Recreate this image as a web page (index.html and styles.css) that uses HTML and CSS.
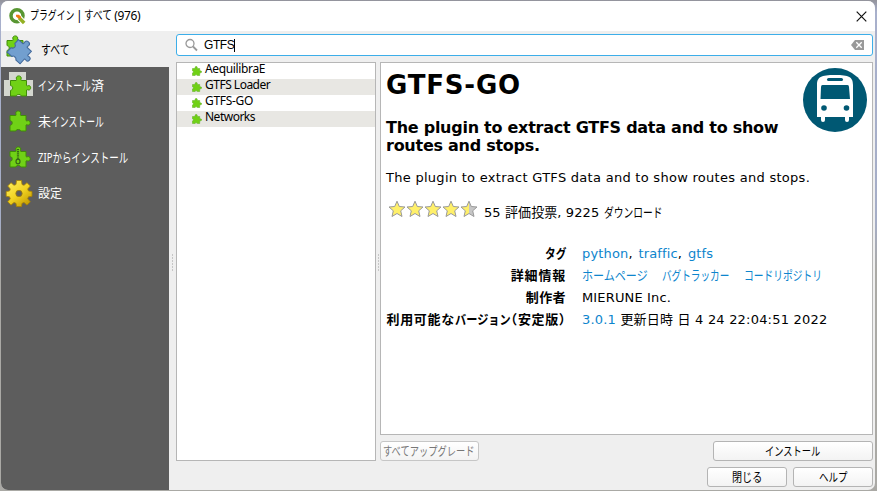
FILE: index.html
```html
<!DOCTYPE html>
<html lang="ja">
<head>
<meta charset="utf-8">
<title>プラグイン | すべて (976)</title>
<link rel="stylesheet" href="styles.css">
</head>
<body>
<svg class="defs" width="0" height="0" aria-hidden="true">
  <defs>
    <linearGradient id="half"><stop offset=".48" stop-color="#fff06a"/><stop offset=".48" stop-color="#c6c6c6"/></linearGradient>
    <linearGradient id="gold" x2=".8" y2="1"><stop stop-color="#fff265"/><stop offset=".55" stop-color="#f1d322"/><stop offset="1" stop-color="#c29a00"/></linearGradient>
    <symbol id="puzzle" viewBox="0 0 22 22"><path d="M1 5.500H6.700C7.500 4.900 6.800 4.500 6.800 3 6.800.2 11.700.2 11.700 3 11.700 4.500 11 4.900 11.800 5.500H17V10.500C17.800 11.300 18.300 10.600 19.300 10.600 21.800 10.600 21.800 15 19.300 15 18.300 15 17.800 14.300 17 15V21H11.800C11.200 20.300 11.600 19.500 9.300 19.500 7 19.500 7.400 20.300 6.800 21H1V15.500C1.800 15 3.200 15 3.200 12.900 3.200 10.800 1.800 11 1 10.500Z"/></symbol>
    <symbol id="star" viewBox="0 0 18 18"><path d="M9 1.200 11.300 6.500 17 7 12.700 10.800 14 16.500 9 13.500 4 16.500 5.300 10.800 1 7 6.700 6.500Z"/></symbol>
  </defs>
</svg>
<div class="window">
  <header class="titlebar">
    <svg class="logo" width="17" height="17" viewBox="0 0 17 17"><circle cx="8" cy="7.800" r="6" fill="none" stroke="#589632" stroke-width="3.500"/><path d="M8 7.500 15.500 15.500" stroke="#fff" stroke-width="5.500"/><path d="M10 9.800 15.200 15" stroke="#93b023" stroke-width="3.500"/><path d="M7 6.800h3l2 2v1.800H9.500L7 8.500Z" fill="#ee7913"/></svg>
    <h1 class="title"><span class="sq t-title">プラグイン</span> | <span class="sq t-all">すべて</span> (976)</h1>
    <svg class="close" width="11" height="11" viewBox="0 0 11 11"><path d="M.7.7 10.300 10.300M10.300.7.7 10.300" stroke="#111" stroke-width="1.200"/></svg>
  </header>
  <div class="body">
    <nav class="sidebar">
      <a class="nav active">
        <svg width="30" height="28" viewBox="0 0 30 28"><use href="#puzzle" x="1" y="0" width="22" height="22" fill="#70d116" stroke="#408c09"/><g transform="rotate(42 16 15)"><use href="#puzzle" x="6" y="3" width="24" height="24" fill="#729fcf" stroke="#456c9e"/></g></svg>
        <span class="sq n-all">すべて</span></a>
      <a class="nav">
        <svg width="28" height="28" viewBox="0 0 28 28"><path d="M4 1H21V9H28V25H-1V9H4Z" fill="#d4d7cf"/><use href="#puzzle" x="4" y="4" width="23" height="22" fill="#70d116" stroke="#408c09"/></svg>
        <span class="lbl"><span class="sq kana">インストール</span>済</span></a>
      <a class="nav">
        <svg width="28" height="28" viewBox="0 0 28 28"><use href="#puzzle" x="4" y="3" width="22" height="22" fill="#70d116" stroke="#408c09"/></svg>
        <span class="lbl">未<span class="sq kana">インストール</span></span></a>
      <a class="nav">
        <svg width="28" height="28" viewBox="0 0 28 28"><use href="#puzzle" x="4" y="3" width="22" height="22" fill="#70d116" stroke="#408c09"/><path d="M13 6V17" stroke="#356716" stroke-width="2.200" stroke-dasharray="1.300 .8"/><ellipse cx="13" cy="18.500" rx="2" ry="2.300" fill="none" stroke="#356716" stroke-width="1.200"/></svg>
        <span class="sq n-zip">ZIPからインストール</span></a>
      <a class="nav">
        <svg width="28" height="28" viewBox="0 0 28 28"><g stroke="#a88300" stroke-width=".8"><path fill="url(#gold)" d="M11.500 1.500h5l.5 4 2 .8 3-2.600 3.300 3.300-2.600 3 .8 2 3.500.5v4.800l-3.500.5-.8 2 2.600 3-3.300 3.300-3-2.600-2 .8-.5 3.200h-5l-.5-3.200-2-.8-3 2.600-3.300-3.300 2.600-3-.8-2-3.300-.5v-4.800l3.300-.5.8-2-2.600-3L6 3.700l3 2.600 2-.8Z"/><circle cx="14" cy="14.500" r="3.200" fill="#5d5d5d"/></g></svg>
        <span class="lbl n-set">設定</span></a>
    </nav>
    <main class="main">
      <div class="search">
        <svg width="14" height="14" viewBox="0 0 14 14"><circle cx="5" cy="5.500" r="4" fill="none" stroke="#999" stroke-width="1.300"/><path d="M8 8.500 12 12.500" stroke="#999" stroke-width="1.800"/></svg>
        <span class="query">GTFS</span><i class="caret"></i>
        <svg class="clear" width="13" height="10" viewBox="0 0 13 10"><path d="M4 0H13V10H4L0 5Z" fill="#999"/><path d="M5.300 2.200 10.700 7.800M10.700 2.200 5.300 7.800" stroke="#fff" stroke-width="1.300"/></svg>
      </div>
      <div class="split">
        <i class="grip"></i>
        <ul class="list">
          <li><svg><use href="#puzzle"/></svg><span class="l1">AequilibraE</span></li>
          <li><svg><use href="#puzzle"/></svg><span class="l2">GTFS Loader</span></li>
          <li><svg><use href="#puzzle"/></svg><span class="l3">GTFS-GO</span></li>
          <li><svg><use href="#puzzle"/></svg><span class="l4">Networks</span></li>
        </ul>
        <i class="grip"></i>
        <section class="right">
          <article class="detail">
            <svg class="bus" width="64" height="64" viewBox="0 0 64 64"><circle cx="32" cy="32" r="32" fill="#005873"/><path fill="#fff" d="M14 49V17C14 9 18 7 32 7S50 9 50 17V49H46V52Q46 54 44 54T42 52V49H22V52Q22 54 20 54T18 52V49Z"/><rect x="24" y="10" width="16" height="3" rx="1.500" fill="#005873"/><path fill="#005873" d="M19.500 17H44.500Q46 17 46 19L47 31H17.500L18 19Q18 17 19.500 17Z"/><circle cx="21" cy="40" r="2.800" fill="#005873"/><circle cx="43.500" cy="40" r="2.800" fill="#005873"/></svg>
            <h2>GTFS-GO</h2>
            <h3>The plugin to extract GTFS data and to show<br>routes and stops.</h3>
            <p class="desc">The plugin to extract GTFS data and to show routes and stops.</p>
            <div class="rating">
              <div class="stars"><svg><use href="#star"/></svg><svg><use href="#star"/></svg><svg><use href="#star"/></svg><svg><use href="#star"/></svg><svg class="half"><use href="#star"/></svg></div>
              <div class="votes">55 評価投票, 9225 <span class="sq v2">ダウンロード</span></div>
            </div>
            <dl>
              <dt><span class="sq d1">タグ</span></dt><dd class="tags"><a>python</a>, <a>traffic</a>, <a>gtfs</a></dd>
              <dt class="d2">詳細情報</dt><dd class="links"><a class="sq k1">ホームページ</a><a class="sq k2">バグトラッカー</a><a class="sq k3">コードリポジトリ</a></dd>
              <dt>制作者</dt><dd class="author">MIERUNE Inc.</dd>
              <dt class="version">利用可能な<span class="sq d4">バージョン</span><span class="paren">（安定版）</span></dt><dd class="date"><a>3.0.1</a> 更新日時 日 4 24 22:04:51 2022</dd>
            </dl>
          </article>
          <div class="actions"><button class="upgrade" disabled><span class="sq b1">すべてアップグレード</span></button><button class="install"><span class="sq b2">インストール</span></button></div>
        </section>
      </div>
      <footer><button><span class="sq b3">閉じる</span></button><button><span class="sq b4">ヘルプ</span></button></footer>
    </main>
  </div>
</div>
</body>
</html>
```
FILE: styles.css
```css
* { box-sizing: border-box; }
body { margin: 0; padding: 1px 2px 1px 1px; height: 491px; overflow: hidden; background: linear-gradient(#93939b, #a8b0cc 12px, #a5adc6 45%, #aaa9a5 55%); font-family: "Noto Sans", "Noto Sans CJK JP", sans-serif; font-size: 12px; color: #000; }
.defs { position: absolute; }
svg { flex: none; overflow: visible; }
.window { height: 489px; background: #efefef; border-radius: 7px; overflow: hidden; display: flex; flex-direction: column; }
.titlebar { height: 30px; flex: none; background: #fff; display: flex; align-items: center; padding: 0 8px; }
.title { margin: 0 auto 0 4px; font-size: 12px; font-weight: 400; line-height: 20px; white-space: nowrap; letter-spacing: -.35px; word-spacing: -1.200px; }
.body { flex: 1; min-height: 0; display: flex; }

/* Condensed kana: --s is the horizontal scale, --w the full width of the text */
.sq { display: inline-block; letter-spacing: 0; transform: scaleX(var(--s)); transform-origin: 0 50%; width: var(--w); margin-right: calc(var(--w) * (var(--s) - 1)); text-align: left; white-space: nowrap; }
.t-title { --w: 60px; --s: .74; }
.t-all { --w: 36px; --s: .8; }
.n-all { --w: 39px; --s: .76; }
.kana { --w: 78px; --s: .68; }
.n-zip { --w: 123px; --s: .73; }
.v2 { --w: 78px; --s: .75; }
.d1 { --w: 26px; --s: .82; }
.k1 { --w: 78px; --s: .85; }
.k2 { --w: 91px; --s: .74; }
.k3 { --w: 104px; --s: .75; }
.d4 { --w: 65px; --s: .86; }
.b1 { --w: 120px; --s: .77; }
.b2 { --w: 72px; --s: .77; }
.b3 { --w: 36px; --s: .84; }
.b4 { --w: 36px; --s: .79; }

.sidebar { width: 168px; flex: none; background: linear-gradient(#efefef 36px, #5d5d5d 36px); }
.nav { height: 36px; display: flex; align-items: center; padding: 0 0 1px 4px; gap: 5px; color: #fff; font-size: 13px; white-space: nowrap; }
.nav.active { color: #000; gap: 6px; }
.n-set { font-size: 12px; }
.main { flex: 1; min-width: 0; padding: 3px 2px 3px 0; display: flex; flex-direction: column; }
.search { height: 22px; margin-left: 7px; border: 1px solid #3daee9; border-radius: 3px; background: #fff; display: flex; align-items: center; padding: 0 8px; }
.query { margin-left: 5px; font-size: 12px; font-family: "Liberation Sans", sans-serif; letter-spacing: -.4px; }
.caret { width: 1px; height: 13px; background: #000; }
.clear { margin-left: auto; }
.split { height: 399px; margin-top: 6px; display: flex; }
.grip { width: 7px; flex: none; height: 17px; margin-top: 192px; background: radial-gradient(circle at 3.500px 1px, #c6c6c6 .7px, transparent 1px) 0 0 / 7px 3px; }
.list + .grip { width: 4px; background-position: -1px 0; }
.list { width: 200px; flex: none; margin: 0; padding: 0; list-style: none; background: #fff; border: 1px solid #b6b6b6; }
.list li { height: 16px; display: flex; align-items: center; padding-left: 15px; gap: 3px; line-height: 16px; }
.list li:nth-child(even) { background: #e8e7e3; }
.list li span { margin-top: -4px; }
.list li svg { width: 10px; height: 10px; margin-top: 0; fill: #70d116; stroke: #57a617; }
.l1 { letter-spacing: -.36px; }
.l2 { letter-spacing: -.5px; }
.l3 { letter-spacing: -.3px; }
.l4 { letter-spacing: -.5px; }
.right { width: 493px; display: flex; flex-direction: column; }
.detail { height: 373px; flex: none; position: relative; background: #fff; border: 1px solid #b6b6b6; padding: 5px; font-family: "DejaVu Sans", "Noto Sans CJK JP", sans-serif; font-size: 13px; white-space: nowrap; }
.bus { position: absolute; right: 5px; top: 5px; }
h2 { margin: 1px 0 0; font-size: 26px; line-height: 32px; letter-spacing: .8px; }
h3 { margin: 18px 0 0; font-size: 16px; line-height: 18px; letter-spacing: -.26px; }
.desc { margin: 14px 0 0; line-height: 18px; letter-spacing: .28px; }
.rating { display: flex; align-items: center; height: 20px; margin-top: 12px; padding-left: 2px; }
.stars { display: flex; margin-right: 6px; }
.stars svg { width: 18px; height: 18px; fill: #fff06a; stroke: #999; }
.stars .half { fill: url(#half); }
.votes { padding-top: 5px; letter-spacing: .1px; }
dl { margin: 24px 0 0; display: grid; grid-template-columns: 180px 1fr; grid-auto-rows: 22px; column-gap: 16px; line-height: 22px; }
dt { text-align: right; font-weight: 700; letter-spacing: .4px; }
.d2 { letter-spacing: .8px; }
.version { letter-spacing: .65px; }
.paren { font-feature-settings: "halt"; }
dd { margin: 0; }
dd a { color: #0d85cd; }
.tags { letter-spacing: .15px; word-spacing: 1.500px; }
.author { letter-spacing: .15px; }
.date { letter-spacing: .2px; }
.links { display: flex; gap: 14px; }
.actions { display: flex; justify-content: space-between; margin-top: 6px; }
button { height: 20px; width: 80px; padding: 0; border: 1px solid #b4b4b4; border-radius: 3px; background: linear-gradient(#fff, #f3f3f3); font: 12px/18px "Noto Sans CJK JP", sans-serif; color: #000; white-space: nowrap; display: flex; align-items: center; justify-content: center; }
button .sq { flex: none; }
.upgrade { width: 99px; color: #777; border-color: #c6c6c6; }
.install { width: 160px; }
footer { display: flex; justify-content: flex-end; gap: 6px; margin-top: 6px; }
```
